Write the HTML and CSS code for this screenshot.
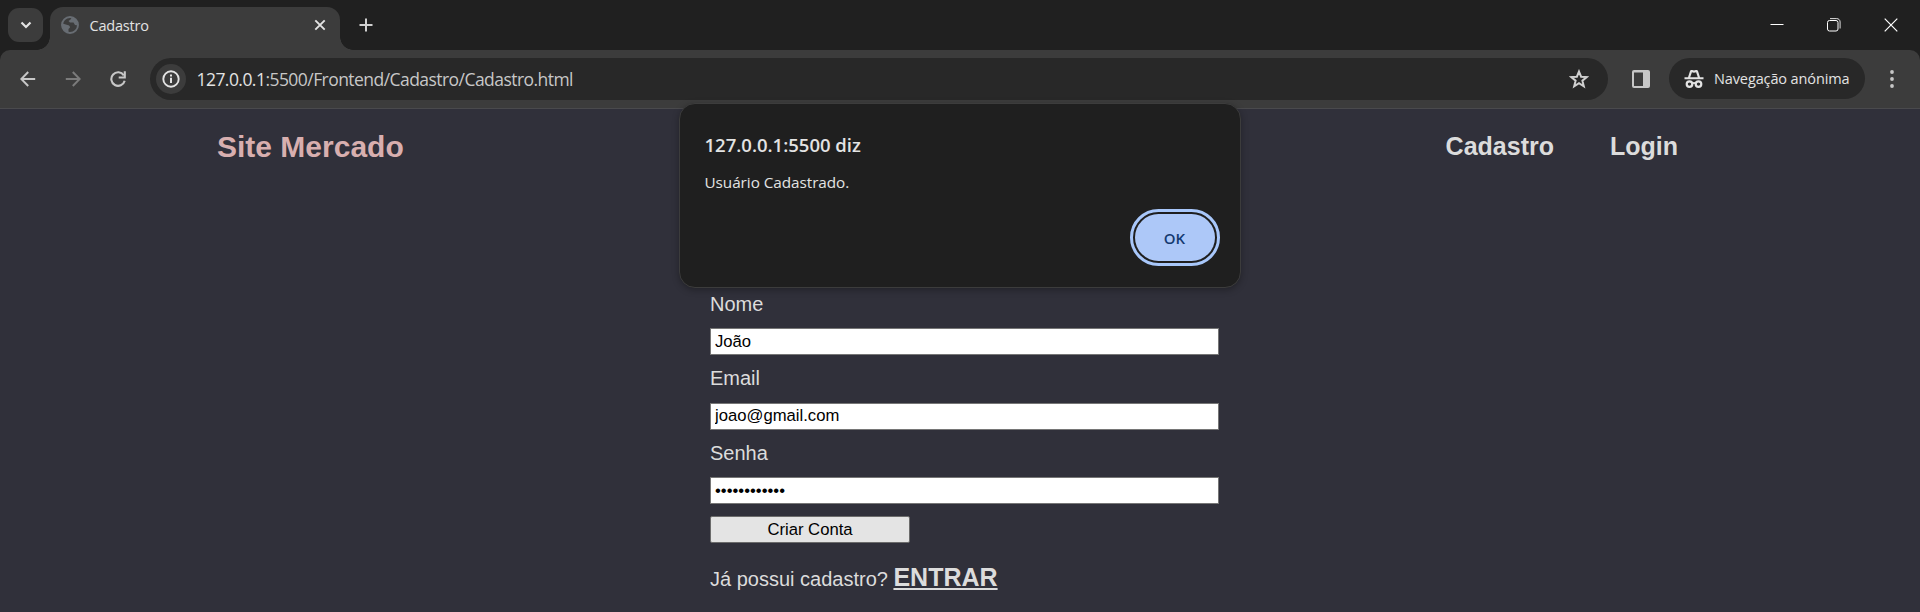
FILE: index.html
```html
<!DOCTYPE html>
<html lang="pt">
<head>
<meta charset="utf-8">
<title>Cadastro</title>
<link rel="stylesheet" href="styles.css">
</head>
<body>
<div class="window">
  <div class="tabstrip">
    <button class="tab-search" aria-label="Procurar separadores"><svg width="12" height="8" viewBox="0 0 12 8"><path d="M1.500 1.500 6 6l4.500-4.500" fill="none" stroke="#e3e3e3" stroke-width="2.200"/></svg></button>
    <div class="tab">
      <svg class="globe" width="18" height="18" viewBox="0 0 18 18"><circle cx="9" cy="9" r="8" fill="#3c3c3c" stroke="#686d73" stroke-width="1.900"/><path d="M1.500 7.500 6.500 9c1.500.3 2.500 1 2.500 2.500L7.500 13v3.500C3.500 16 .8 12 1.500 7.500zM11 1.200c4 1 6.200 4.300 5.700 8.300l-2.700-.5-1.500-2.500H9L7.500 5l2-1.500z" fill="#686d73"/></svg>
      <span class="tab-title">Cadastro</span>
      <svg width="12" height="12" viewBox="0 0 12 12"><path d="M1.300 1.300l9.400 9.400M10.700 1.300l-9.400 9.400" stroke="#e3e3e3" stroke-width="1.900"/></svg>
    </div>
    <svg class="new-tab" width="14" height="14" viewBox="0 0 14 14"><path d="M7 .5v13M.5 7h13" stroke="#d0d0d0" stroke-width="2"/></svg>
    <div class="controls">
      <svg width="14" height="14" viewBox="0 0 14 14"><path d="M.5 6.500h13" stroke="#fff" stroke-width="1"/></svg>
      <svg width="14" height="14" viewBox="0 0 14 14" fill="none" stroke="#fff" stroke-width="1"><rect x=".5" y="2.500" width="10.500" height="10.500" rx="2"/><path d="M3 .6h6.700c2 0 3.400 1.400 3.400 3.400v6.500" stroke-opacity=".85"/></svg>
      <svg width="14" height="14" viewBox="0 0 14 14"><path d="M.7.7l12.600 12.600M13.300.7L.7 13.300" stroke="#fff" stroke-width="1.200"/></svg>
    </div>
  </div>
  <div class="toolbar">
    <svg class="back" width="16" height="16" viewBox="0 0 16 16" fill="none" stroke="#c7c7c7" stroke-width="2"><path d="M15.200 8H2M8.200 1 1.300 8l6.900 7"/></svg>
    <svg class="forward" width="16" height="16" viewBox="0 0 16 16" fill="none" stroke="#7b7b7b" stroke-width="2"><path d="M.8 8H14M7.800 1l6.900 7-6.900 7"/></svg>
    <svg class="reload" width="16" height="16" viewBox="0 0 16 16"><path d="M13.800 4.300A6.800 6.800 0 1 0 14.700 9.800" fill="none" stroke="#c7c7c7" stroke-width="2.100"/><path d="M14.800.3v6.200H8.700" fill="none" stroke="#c7c7c7" stroke-width="2.100"/></svg>
    <div class="omnibox">
      <span class="site-info"><svg width="18" height="18" viewBox="0 0 18 18"><circle cx="9" cy="9" r="7.700" fill="none" stroke="#e3e3e3" stroke-width="1.900"/><path d="M9 7.800v5.200M9 4.600v2" stroke="#e3e3e3" stroke-width="2"/></svg></span>
      <span class="url"><b>127.0.0.1</b>:5500/Frontend/Cadastro/Cadastro.html</span>
      <svg width="20" height="20" viewBox="0 0 20 20"><path d="M10 2.500l2.100 5.200 5.700.4-4.400 3.600 1.400 5.600L10 14.200l-4.800 3.100 1.400-5.600L2.200 8.100l5.700-.4z" fill="none" stroke="#d0d0d0" stroke-width="2"/></svg>
    </div>
    <svg class="side-panel" width="18" height="18" viewBox="0 0 18 18"><rect width="18" height="18" rx="2" fill="#c7c7c7"/><path d="M2 2.500h9v13.500H2z" fill="#3c3c3c"/></svg>
    <div class="incognito">
      <svg width="20" height="20" viewBox="0 0 20 20"><path d="M.5 8.200h19v2H.5zM4 8.200 6 2.100C6.400.8 7.300.7 8.300 1.100c1.200.5 2.200.5 3.400 0 1-.4 1.900-.3 2.300 1l2 6.100h-2.200l-1.700-5c-1.400.6-2.800.6-4.200 0l-1.700 5z" fill="#e3e3e3"/><path d="M8.400 14.500c1-.7 2.200-.7 3.200 0" fill="none" stroke="#e3e3e3" stroke-width="1.700"/><g fill="none" stroke="#e3e3e3" stroke-width="2.200"><circle cx="5.500" cy="15.100" r="2.800"/><circle cx="14.500" cy="15.100" r="2.800"/></g></svg>
      <span>Navegação anónima</span>
    </div>
    <svg class="menu" width="4" height="18" viewBox="0 0 4 18" fill="#c7c7c7"><circle cx="2" cy="2" r="1.900"/><circle cx="2" cy="9" r="1.900"/><circle cx="2" cy="16" r="1.900"/></svg>
  </div>
  <main class="page">
    <header class="site-header">
      <div class="logo">Site Mercado</div>
      <nav class="nav"><a>Cadastro</a><a>Login</a></nav>
    </header>
    <form class="form">
      <label for="nome">Nome</label>
      <input id="nome" type="text" value="João">
      <label for="email">Email</label>
      <input id="email" type="text" value="joao@gmail.com" spellcheck="false">
      <label for="senha">Senha</label>
      <input id="senha" type="password" value="senha1234567">
      <button class="submit" type="button">Criar Conta</button>
      <p class="signin">Já possui cadastro? <a>ENTRAR</a></p>
    </form>
  </main>
  <div class="dialog" role="alertdialog">
    <div class="dialog-title">127.0.0.1:5500 diz</div>
    <div class="dialog-text">Usuário Cadastrado.</div>
    <button class="ok" type="button">OK</button>
  </div>
</div>
</body>
</html>
```
FILE: styles.css
```css
* { box-sizing: border-box; }
body { margin: 0; overflow: hidden; background: #202020; font-family: "Open Sans", "Noto Sans", sans-serif; }
svg { display: block; flex: none; }
button { font: inherit; border: 0; padding: 0; }
.window { position: relative; height: 612px; display: flex; flex-direction: column; }

.tabstrip { height: 50px; display: flex; align-items: flex-end; padding-left: 8px; background: #202020; }
.tab-search { width: 35px; height: 34px; margin: 0 7px 8px 0; border-radius: 11px; background: #3c3c3c; display: grid; place-items: center; }
.tab { position: relative; width: 290px; height: 43px; padding: 0 14px 7px 11px; border-radius: 13px 13px 0 0; background: #3c3c3c; display: flex; align-items: center; }
.tab::before, .tab::after { content: ""; position: absolute; bottom: 0; width: 13px; height: 13px; }
.tab::before { left: -13px; background: radial-gradient(circle at 0 0, transparent 12.500px, #3c3c3c 13px); }
.tab::after { right: -13px; background: radial-gradient(circle at 100% 0, transparent 12.500px, #3c3c3c 13px); }
.tab-title { flex: 1; margin-left: 10.500px; padding-top: 1px; font-size: 14.500px; letter-spacing: -.2px; line-height: 20px; color: #e3e3e3; }
.new-tab { margin: 0 0 18px 18.500px; }
.controls { display: flex; gap: 43px; margin: 0 22px 18px auto; }

.toolbar { height: 59px; display: flex; align-items: center; padding: 0 26px 1px 20px; border-radius: 10px 10px 0 0; background: #3c3c3c; border-bottom: 1px solid #4a4a4d; }
.forward { margin-left: 29px; }
.reload { margin: 0 24px 0 29px; }
.omnibox { width: 1458px; height: 42px; display: flex; align-items: center; padding: 0 19px 0 6px; border-radius: 21px; background: #282828; }
.site-info { width: 30px; height: 30px; border-radius: 50%; background: #3c3c3c; display: grid; place-items: center; }
.url { flex: 1; margin-left: 10.500px; padding-top: 1px; font-size: 17.500px; letter-spacing: -.55px; line-height: 24px; color: #c7c7c7; }
.url b { font-weight: 400; color: #e3e3e3; }
.side-panel { margin-left: 24px; }
.incognito { width: 196px; height: 41px; margin: 0 25px 0 19px; padding-left: 15px; border-radius: 21px; background: #282828; color: #e3e3e3; display: flex; align-items: center; gap: 10px; font-size: 14.500px; letter-spacing: -.12px; white-space: nowrap; }

.page { flex: 1; background: #30303a; font-family: "Liberation Sans", Arial, sans-serif; color: #dcdcdc; }
.site-header { height: 74px; padding: 0 242px 0 217px; display: flex; align-items: center; justify-content: space-between; font-weight: 700; }
.logo { padding-top: 1px; font-size: 30px; color: #d8afaf; }
.nav { display: flex; gap: 56px; font-size: 25px; }
.form { width: 509px; margin: 106px 0 0 710px; display: flex; flex-direction: column; }
.form label { font-size: 20px; line-height: 30px; height: 39px; }
.form label[for="email"] { line-height: 28px; }
.form input { height: 27px; margin: 0 0 8.500px; padding: 1px 3px 1px 4px; border: 1px solid #767676; border-radius: 0; background: #fff; color: #000; font: 16.670px "Liberation Sans", Arial, sans-serif; }
.submit { width: 200px; height: 27px; margin-top: 3px; padding-top: 1px; border: 1px solid #6b6b6b; border-radius: 2px; background: #e4e4e4; color: #000; font-size: 16.670px; }
.signin { margin: 20px 0 0; font-size: 20px; line-height: 29px; }
.signin a { font-size: 25px; font-weight: 700; text-decoration: underline; }

.dialog { position: absolute; left: 679px; top: 103px; width: 562px; height: 185px; padding: 28px 25px 25px 24.500px; display: flex; flex-direction: column; border: 1px solid #3c3c3c; border-radius: 16px; background: #1f1f1f; color: #e3e3e3; box-shadow: 0 2px 7px rgba(0, 0, 0, .3); }
.dialog-title { font-size: 18.500px; line-height: 26px; font-weight: 600; }
.dialog-text { margin-top: 13px; font-size: 15.300px; letter-spacing: -.05px; line-height: 22px; }
.ok { align-self: flex-end; width: 80px; height: 47px; margin: 21px 0 0; padding: 1px 1px 0 0; border-radius: 24px; background: #adc8f8; color: #143a70; font-size: 15px; font-weight: 600; outline: 3px solid #a8c7fa; outline-offset: 2px; }
```
